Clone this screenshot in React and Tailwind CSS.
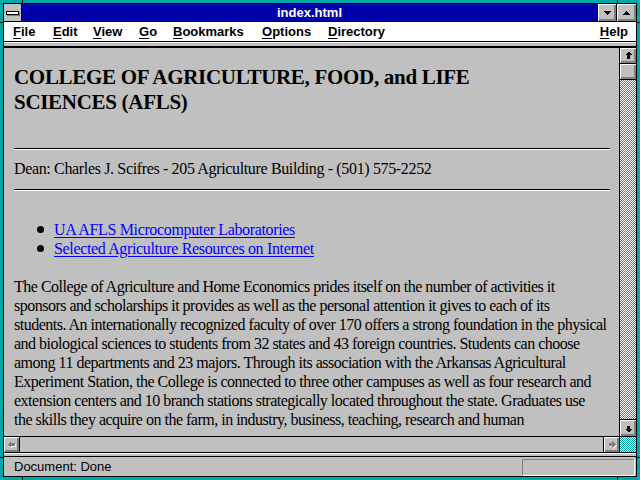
import React from 'react'

const raised = "bg-[#c0c0c0] shadow-[inset_1px_1px_0_#ffffff,inset_-1px_-1px_0_#808080,inset_-2px_-2px_0_#808080]"
const checker = "bg-[image:repeating-conic-gradient(#00a8a8_0%_25%,#ffffff_0%_50%)] bg-[length:2px_2px]"

function Arrow({ dir, disabled }) {
  const shapes = {
    up: '7.5,3.5 11,7 9,7 9,10.5 6,10.5 6,7 4,7',
    down: '7.5,11.5 11,8 9,8 9,4.5 6,4.5 6,8 4,8',
    left: '3.5,7.5 7,4 7,6 10.5,6 10.5,9 7,9 7,11',
    right: '11.5,7.5 8,4 8,6 4.5,6 4.5,9 8,9 8,11',
  }
  return (
    <svg width="15" height="15" viewBox="0 0 15 15" shapeRendering="crispEdges">
      {disabled && <polygon points={shapes[dir]} fill="#ffffff" transform="translate(1 1)" />}
      <polygon points={shapes[dir]} fill={disabled ? '#808080' : '#000000'} />
    </svg>
  )
}

function Tri({ up }) {
  return (
    <svg width="9" height="6" viewBox="0 0 9 6" shapeRendering="crispEdges">
      <polygon points={up ? '1,5 8,5 4.5,1' : '1,1 8,1 4.5,5'} fill="#000" />
    </svg>
  )
}

function MenuItem({ label, w }) {
  return (
    <span className={w}>
      <span className="underline underline-offset-2">{label[0]}</span>
      {label.slice(1)}
    </span>
  )
}

const paragraph = [
  'The College of Agriculture and Home Economics prides itself on the number of activities it',
  'sponsors and scholarships it provides as well as the personal attention it gives to each of its',
  'students. An internationally recognized faculty of over 170 offers a strong foundation in the physical',
  'and biological sciences to students from 32 states and 43 foreign countries. Students can choose',
  'among 11 departments and 23 majors. Through its association with the Arkansas Agricultural',
  'Experiment Station, the College is connected to three other campuses as well as four research and',
  'extension centers and 10 branch stations strategically located throughout the state. Graduates use',
  'the skills they acquire on the farm, in industry, business, teaching, research and human',
  'resources.',
]

export default function App() {
  return (
    <div className="relative w-[640px] h-[480px] bg-[#00a8a8] p-[3px] font-['Liberation_Sans',Arial,sans-serif]">
      {/* frame notches */}
      <span className="absolute left-[22px] top-0 w-px h-[4px] bg-black" />
      <span className="absolute left-[617px] top-0 w-px h-[4px] bg-black" />
      <span className="absolute left-[22px] bottom-0 w-px h-[4px] bg-black" />
      <span className="absolute left-[617px] bottom-0 w-px h-[4px] bg-black" />
      <span className="absolute left-0 top-[22px] w-[4px] h-px bg-black" />
      <span className="absolute right-0 top-[22px] w-[4px] h-px bg-black" />
      <span className="absolute left-0 top-[457px] w-[4px] h-px bg-black" />
      <span className="absolute right-0 top-[457px] w-[4px] h-px bg-black" />

      <div className="h-full border border-black flex flex-col bg-[#c0c0c0]">
        {/* title bar */}
        <div className="h-[18px] flex border-b border-black shrink-0">
          <div className="w-[18px] border-r border-black bg-[#c0c0c0] flex items-center justify-center">
            <div className="w-[13px] h-[4px] bg-white border border-black shadow-[1px_1px_0_#808080]" />
          </div>
          <div className="flex-1 bg-[#0000a8] text-white font-bold text-[13px] leading-[17px] text-center">
            index.html
          </div>
          <div className={`w-[19px] border-l border-black flex items-center justify-center ${raised}`}>
            <Tri />
          </div>
          <div className={`w-[20px] border-l border-black flex items-center justify-center ${raised}`}>
            <Tri up />
          </div>
        </div>

        {/* menu bar */}
        <div className="h-[20px] bg-white border-b border-black flex pl-[9px] pr-[8px] text-[13px] font-bold leading-[19px] text-black shrink-0">
          <MenuItem label="File" w="w-[40px]" />
          <MenuItem label="Edit" w="w-[40px]" />
          <MenuItem label="View" w="w-[46px]" />
          <MenuItem label="Go" w="w-[34px]" />
          <MenuItem label="Bookmarks" w="w-[89px]" />
          <MenuItem label="Options" w="w-[66px]" />
          <MenuItem label="Directory" w="w-[90px]" />
          <span className="ml-auto">
            <span className="underline underline-offset-2">H</span>elp
          </span>
        </div>

        {/* strip */}
        <div className="h-[5px] border-t border-white bg-[#c0c0c0] border-b border-b-black shrink-0" />

        {/* main */}
        <div className="flex-1 flex border-t border-black min-h-0">
          <div className="flex-1 overflow-hidden pl-[10px] pt-[17px] text-black font-['Liberation_Serif','Times_New_Roman',serif]">
            <h1 className="text-[21px] font-bold leading-[25px] tracking-[-0.3px] whitespace-nowrap">
              COLLEGE OF AGRICULTURE, FOOD, and LIFE
              <br />
              SCIENCES (AFLS)
            </h1>
            <div className="mt-[33px] mr-[9px] h-[2px] border-t border-black border-b border-b-white" />
            <p className="mt-[9px] text-[16px] leading-[19px] tracking-[-0.35px] whitespace-nowrap">
              Dean: Charles J. Scifres - 205 Agriculture Building - (501) 575-2252
            </p>
            <div className="mt-[11px] mr-[9px] h-[2px] border-t border-black border-b border-b-white" />
            <ul className="mt-[29px] text-[16px] leading-[19px] tracking-[-0.35px]">
              {['UA AFLS Microcomputer Laboratories', 'Selected Agriculture Resources on Internet'].map(t => (
                <li key={t} className="flex items-center">
                  <span className="ml-[23px] mr-[10px] w-[7px] h-[7px] rounded-full bg-black" />
                  <span className="text-[#0000ff] underline underline-offset-[2px]">{t}</span>
                </li>
              ))}
            </ul>
            <div className="mt-[19px] text-[16px] leading-[19px] tracking-[-0.5px]">
              {paragraph.map(line => (
                <div key={line} className="whitespace-nowrap">{line}</div>
              ))}
            </div>
          </div>

          {/* vertical scrollbar */}
          <div className="w-[17px] border-l border-black flex flex-col">
            <div className={`h-[16px] border-b border-black flex items-center justify-center ${raised}`}>
              <Arrow dir="up" />
            </div>
            <div className={`h-[16px] border-b border-black ${raised}`} />
            <div className={`flex-1 ${checker}`} />
            <div className={`h-[17px] border-t border-black flex items-center justify-center ${raised}`}>
              <Arrow dir="down" />
            </div>
          </div>
        </div>

        {/* horizontal scrollbar */}
        <div className="h-[17px] flex border-t border-b border-black shrink-0">
          <div className={`w-[16px] border-r border-black flex items-center justify-center ${raised}`}>
            <Arrow dir="left" disabled />
          </div>
          <div className="flex-1 bg-[#c0c0c0]" />
          <div className={`w-[16px] border-l border-black flex items-center justify-center ${raised}`}>
            <Arrow dir="right" disabled />
          </div>
          <div className={`w-[17px] border-l border-black ${checker}`} />
        </div>

        {/* strip */}
        <div className="h-[4px] border-t border-white bg-[#c0c0c0] border-b border-b-black shrink-0" />

        {/* status bar */}
        <div className="h-[19px] flex items-start bg-[#c0c0c0] shrink-0">
          <span className="pl-[10px] text-[13px] leading-[19px] text-black">Document: Done</span>
          <div className="ml-auto mr-[1px] mt-[2px] w-[113px] h-[17px] border-t border-l border-[#808080] border-b border-r border-b-white border-r-white" />
        </div>
      </div>
    </div>
  )
}
